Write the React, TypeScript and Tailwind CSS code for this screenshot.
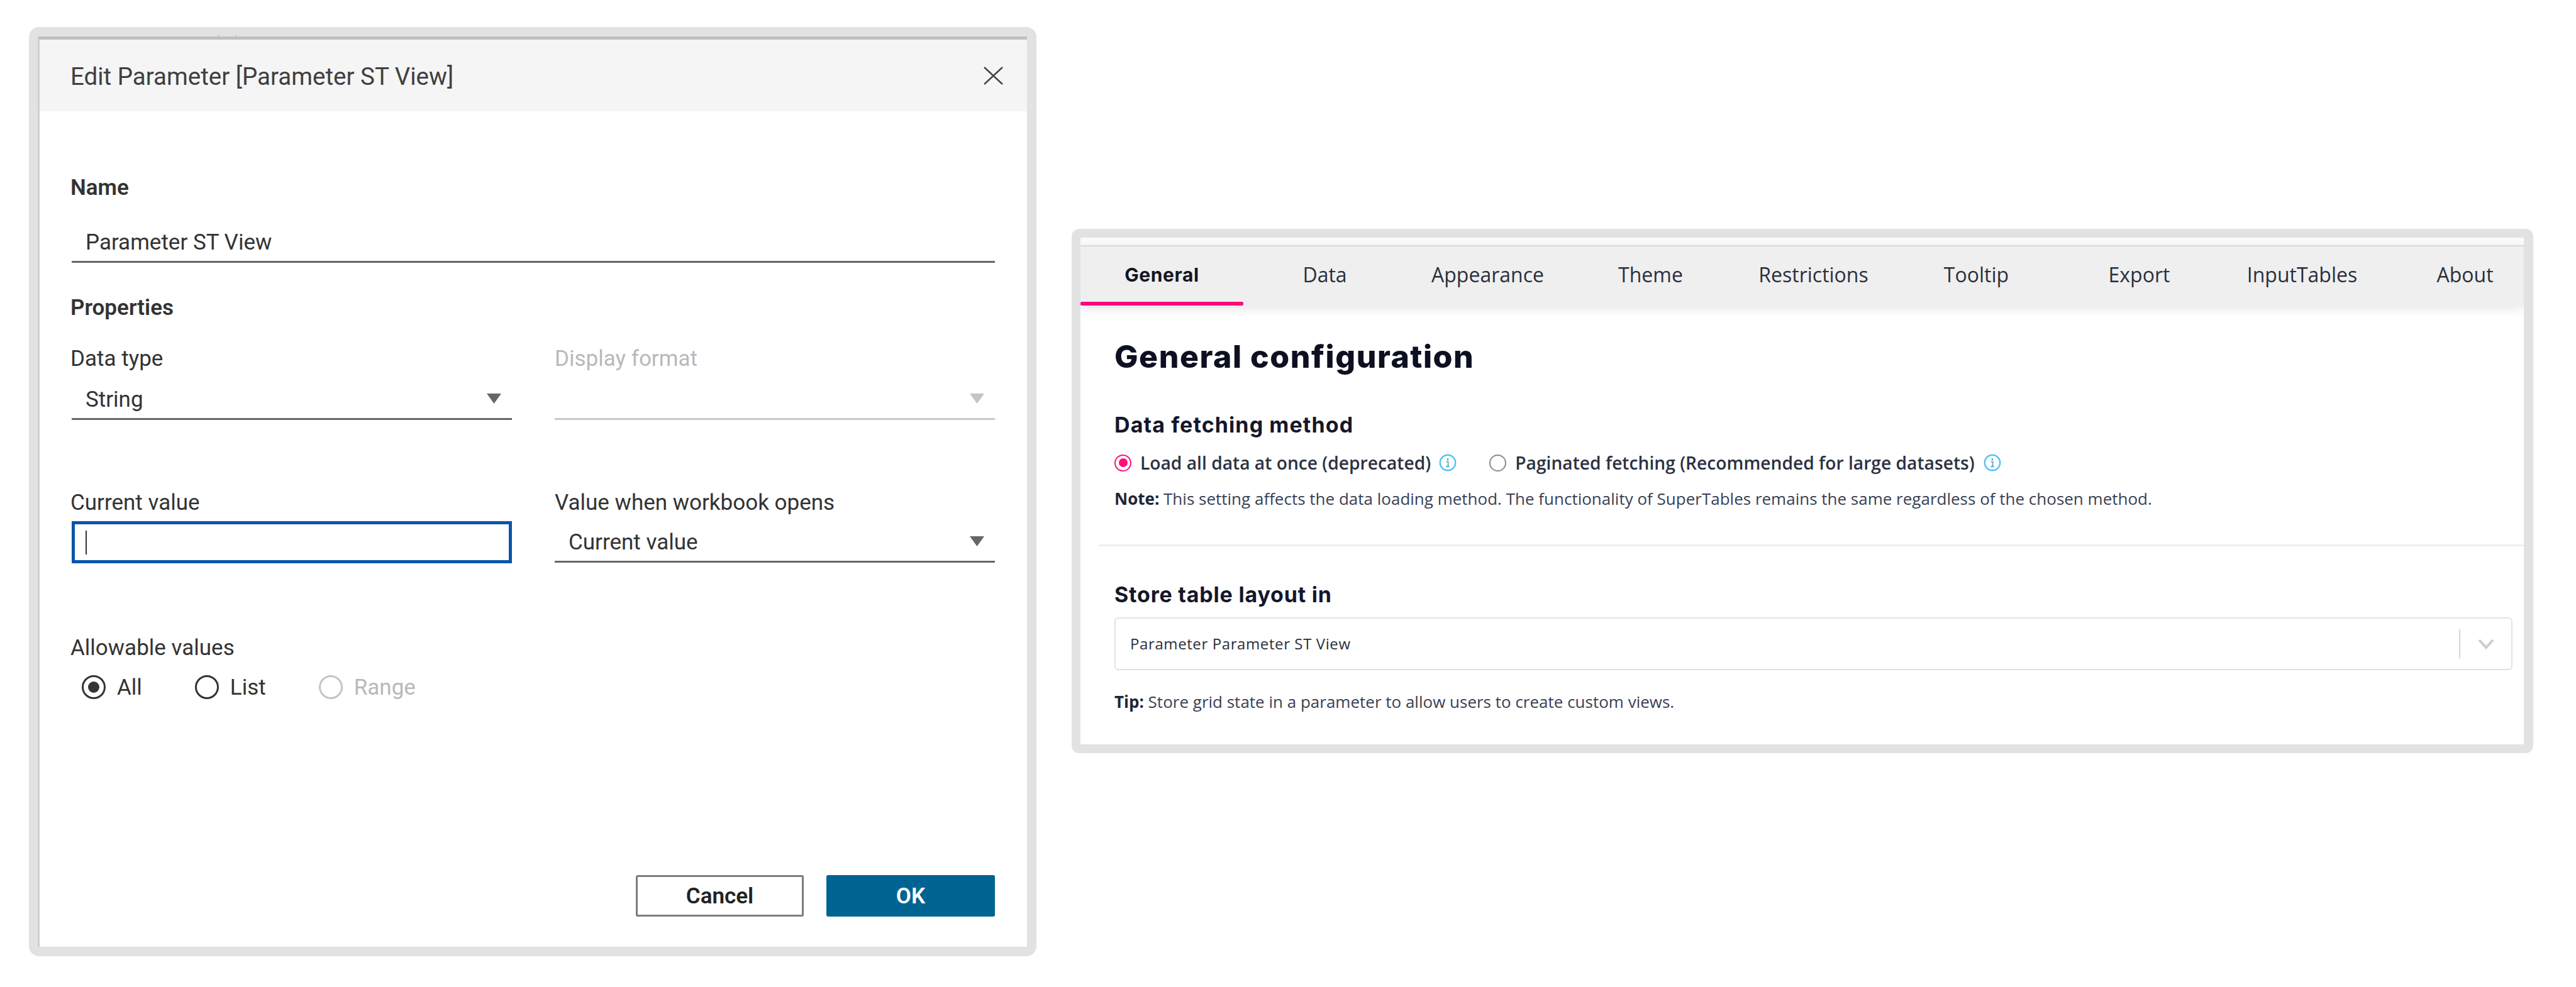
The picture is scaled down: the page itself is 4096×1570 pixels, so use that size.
import React from "react";

function Arrow({ disabled }: { disabled?: boolean }) {
  return (
    <svg width="23" height="16" viewBox="0 0 23 16" className="shrink-0">
      <polygon points="0,0 23,0 11.5,16" fill={disabled ? "#c4c4c4" : "#666666"} />
    </svg>
  );
}

function Field({ value, disabled }: { value?: string; disabled?: boolean }) {
  return (
    <div className={`h-[66px] flex items-center justify-between pl-[22px] pr-[17px] border-b-[3px] ${disabled ? "border-[#c8c8c8]" : "border-[#666666]"}`}>
      <span className="pt-[5px]">{value}</span>
      <Arrow disabled={disabled} />
    </div>
  );
}

function TabRadio({ label, checked, disabled }: { label: string; checked?: boolean; disabled?: boolean }) {
  return (
    <div className={`flex items-center gap-[18px] ${disabled ? "text-[#b9b9b9]" : ""}`}>
      <span className={`w-[38px] h-[38px] rounded-full border-[3px] flex items-center justify-center ${disabled ? "border-[#c4c4c4]" : "border-[#333333]"}`}>
        {checked && <span className="w-[18px] h-[18px] rounded-full bg-[#333333]" />}
      </span>
      <span className="pt-[3px]">{label}</span>
    </div>
  );
}

function Info() {
  return (
    <svg width="28" height="28" viewBox="0 0 28 28" className="shrink-0">
      <circle cx="14" cy="14" r="12.2" fill="none" stroke="#4fc3ef" strokeWidth="2.4" />
      <circle cx="14" cy="8.6" r="1.6" fill="#4fa9d8" />
      <path d="M11.6 12.4h3v7.4M11.4 20h5.2" fill="none" stroke="#4fa9d8" strokeWidth="1.8" />
    </svg>
  );
}

function PinkRadio({ checked }: { checked?: boolean }) {
  return (
    <span className={`w-[27px] h-[27px] shrink-0 rounded-full border-[2.5px] flex items-center justify-center ${checked ? "border-[#ff0f7b]" : "border-[#8a8a8a]"}`}>
      {checked && <span className="w-[14px] h-[14px] rounded-full bg-[#ff0f7b]" />}
    </span>
  );
}

const tabs = ["General", "Data", "Appearance", "Theme", "Restrictions", "Tooltip", "Export", "InputTables", "About"];

export default function App() {
  return (
    <div className="w-[4096px] h-[1570px] bg-white flex items-start overflow-hidden">
      {/* Tableau dialog */}
      <div className="relative ml-[46px] mt-[43px] w-[1602px] h-[1478px] shrink-0 bg-[#e2e2e2] rounded-[16px] pl-[14px] pr-[15px] pt-[15px] pb-[15px] flex flex-col">
        <span className="absolute left-[301px] top-[12px] w-[1px] h-[3px] bg-[#b5b5b5]" />
        <span className="absolute left-[329px] top-[12px] w-[1px] h-[3px] bg-[#b5b5b5]" />
        <div className="flex-1 flex flex-col bg-white border-t-[5px] border-l-[3px] border-t-[#c0c0c0] border-l-[#cfcfcf] font-['Roboto',sans-serif] text-[35px] text-[#333333]">
          <div className="h-[114px] shrink-0 bg-[#f5f5f5] flex items-center justify-between pl-[49px] pr-[38px]">
            <span className="text-[38.5px] pt-[3px] text-[#404040]">Edit Parameter [Parameter ST View]</span>
            <svg width="31" height="29" viewBox="0 0 31 29">
              <path d="M1 1L30 28M30 1L1 28" stroke="#444444" strokeWidth="2.4" fill="none" />
            </svg>
          </div>
          <div className="flex-1 flex flex-col pl-[51px] pr-[51px] pb-[48px]">
            <div className="mt-[100px] h-[40px] leading-[44px] font-semibold -ml-[2px]">Name</div>
            <div className="mt-[35px]"><div className="h-[66px] flex items-center pl-[22px] pt-[5px] border-b-[3px] border-[#666666]">Parameter ST View</div></div>
            <div className="mt-[50px] h-[40px] leading-[44px] font-semibold -ml-[2px]">Properties</div>
            <div className="mt-[41px] grid grid-cols-2 gap-x-[68px]">
              <div>
                <div className="h-[40px] leading-[44px] -ml-[2px]">Data type</div>
                <div className="mt-[13px]"><Field value="String" /></div>
              </div>
              <div>
                <div className="h-[40px] leading-[44px] text-[#b9b9b9]">Display format</div>
                <div className="mt-[13px]"><Field disabled /></div>
              </div>
            </div>
            <div className="mt-[110px] grid grid-cols-2 gap-x-[68px]">
              <div>
                <div className="h-[40px] leading-[44px] -ml-[2px]">Current value</div>
                <div className="mt-[11px] h-[67px] border-[5px] border-[#0a55ac] flex items-center pl-[17px]">
                  <span className="w-[2px] h-[38px] bg-[#333333]" />
                </div>
              </div>
              <div>
                <div className="h-[40px] leading-[44px]">Value when workbook opens</div>
                <div className="mt-[11px]"><Field value="Current value" /></div>
              </div>
            </div>
            <div className="mt-[113px] h-[40px] leading-[44px] -ml-[2px]">Allowable values</div>
            <div className="mt-[24px] h-[40px] flex items-center gap-[84px] pl-[16px]">
              <TabRadio label="All" checked />
              <TabRadio label="List" />
              <TabRadio label="Range" disabled />
            </div>
            <div className="mt-auto flex justify-end gap-[36px] font-semibold">
              <div className="w-[267px] h-[66px] pt-[3px] rounded-[3px] border-[3px] border-[#7c7c7c] flex items-center justify-center text-[#222222]">Cancel</div>
              <div className="w-[268px] h-[66px] pt-[3px] rounded-[3px] bg-[#006492] flex items-center justify-center text-white">OK</div>
            </div>
          </div>
        </div>
      </div>

      {/* SuperTables config */}
      <div className="ml-[56px] mt-[364px] w-[2324px] h-[834px] shrink-0 bg-[#e2e2e2] rounded-[12px] pl-[14px] pr-[15px] pt-[14px] pb-[14px] flex flex-col">
        <div className="flex-1 flex flex-col bg-white overflow-hidden font-['Open_Sans',sans-serif] text-[#1e2536]">
          <div className="h-[12px] shrink-0 bg-[#fafafa]" />
          <div className="relative z-10 shrink-0 flex h-[96px] bg-[#efefef] border-t-[2px] border-[#d9d9d9] shadow-[0_6px_16px_rgba(0,0,0,0.09)] text-[32px] text-[#2a2f3d]">
            {tabs.map((t, i) => (
              <div key={t} className={`relative w-[259px] shrink-0 flex items-center justify-center pb-[4px] ${i === 0 ? "font-bold font-['Inter',sans-serif] text-[30px] tracking-[0.6px] text-[#14161f]" : ""}`}>
                {t}
                {i === 0 && <span className="absolute left-0 right-0 bottom-0 h-[6px] rounded-[2px] bg-[#ff0a78]" />}
              </div>
            ))}
          </div>
          <div className="flex-1 flex flex-col pl-[54px] pr-[18px]">
            <h1 className="mt-[51px] h-[60px] leading-[60px] text-[50px] tracking-[1.5px] font-extrabold font-['Inter',sans-serif] text-[#0d1020]">General configuration</h1>
            <div className="mt-[57px] h-[44px] leading-[44px] text-[34px] tracking-[1.1px] font-bold font-['Inter',sans-serif] text-[#14172a]">Data fetching method</div>
            <div className="mt-[22px] h-[32px] flex items-center text-[28.2px] font-semibold text-[#2b3142]">
              <PinkRadio checked />
              <span className="ml-[14px]">Load all data at once (deprecated)</span>
              <span className="ml-[13px]"><Info /></span>
              <span className="ml-[52px]"><PinkRadio /></span>
              <span className="ml-[14px]">Paginated fetching (Recommended for large datasets)</span>
              <span className="ml-[14px]"><Info /></span>
            </div>
            <div className="mt-[25px] h-[32px] leading-[32px] text-[26px] font-medium text-[#3a4154]"><b className="font-bold text-[#1e2536]">Note:</b> This setting affects the data loading method. The functionality of SuperTables remains the same regardless of the chosen method.</div>
            <div className="mt-[57px] -ml-[24px] -mr-[18px] h-[3px] bg-[#eceef1]" />
            <div className="mt-[55px] h-[44px] leading-[44px] text-[34px] tracking-[0.8px] font-bold font-['Inter',sans-serif] text-[#14172a]">Store table layout in</div>
            <div className="mt-[14px] h-[84px] rounded-[6px] border-[2px] border-[#dfe3ea] flex items-center pl-[23px] text-[24px] font-medium tracking-[0.6px] text-[#2b2f3a]">
              <span className="flex-1">Parameter Parameter ST View</span>
              <span className="w-[2px] h-[46px] bg-[#d4d4d4]" />
              <svg width="26" height="17" viewBox="0 0 26 17" className="ml-[28px] mr-[27px]">
                <path d="M2 2L13 14L24 2" stroke="#cccccc" strokeWidth="4" fill="none" />
              </svg>
            </div>
            <div className="mt-[34px] h-[32px] leading-[32px] text-[26px] font-medium text-[#3a4154]"><b className="font-bold text-[#1e2536]">Tip:</b> Store grid state in a parameter to allow users to create custom views.</div>
          </div>
        </div>
      </div>
    </div>
  );
}
